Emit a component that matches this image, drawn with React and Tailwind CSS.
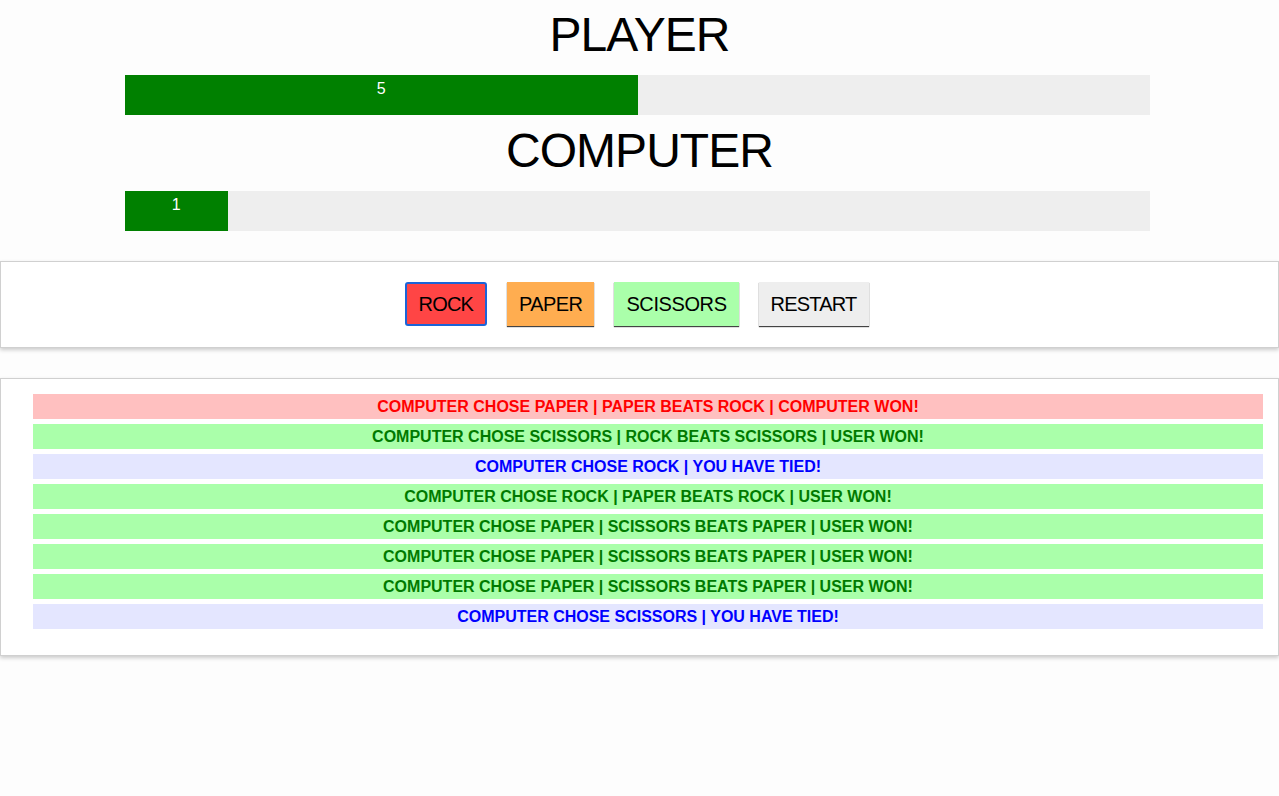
import React, { useState } from "react";

const MAX_SCORE = 10;

const history = [
  { text: "COMPUTER CHOSE PAPER | PAPER BEATS ROCK | COMPUTER WON!", result: "lose" },
  { text: "COMPUTER CHOSE SCISSORS | ROCK BEATS SCISSORS | USER WON!", result: "win" },
  { text: "COMPUTER CHOSE ROCK | YOU HAVE TIED!", result: "tie" },
  { text: "COMPUTER CHOSE ROCK | PAPER BEATS ROCK | USER WON!", result: "win" },
  { text: "COMPUTER CHOSE PAPER | SCISSORS BEATS PAPER | USER WON!", result: "win" },
  { text: "COMPUTER CHOSE PAPER | SCISSORS BEATS PAPER | USER WON!", result: "win" },
  { text: "COMPUTER CHOSE PAPER | SCISSORS BEATS PAPER | USER WON!", result: "win" },
  { text: "COMPUTER CHOSE SCISSORS | YOU HAVE TIED!", result: "tie" },
];

const rowStyles = {
  lose: "bg-[#ffc0c0] text-[#ff0000]",
  win: "bg-[#aaffaa] text-[#007a00]",
  tie: "bg-[#e4e6ff] text-[#0000ff]",
};

function ScoreBar({ score }) {
  return (
    <div className="ml-[125px] w-[1025px] h-10 bg-[#eeeeee]">
      <div
        className="h-full bg-[#008000] text-white text-center text-base leading-[18px] pt-[5px]"
        style={{ width: `${(score / MAX_SCORE) * 100}%` }}
      >
        {score}
      </div>
    </div>
  );
}

export default function App() {
  const [scores] = useState({ player: 5, computer: 1 });

  return (
    <div className="min-h-[796px] bg-[#fdfdfd] font-['Liberation_Sans',Arial,sans-serif] text-black">
      <h1 className="text-center text-[48px] leading-[54px] tracking-[-0.02em] pt-2 mb-[13px]">PLAYER</h1>
      <ScoreBar score={scores.player} />
      <h1 className="text-center text-[48px] leading-[54px] tracking-[-0.02em] mt-[9px] mb-[13px]">COMPUTER</h1>
      <ScoreBar score={scores.computer} />

      {/* controls */}
      <div className="mt-[30px] border border-[#d0d0d0] bg-white shadow-[0_2px_4px_rgba(0,0,0,0.2)] h-[87px] pr-[6px] flex items-center justify-center gap-5">
        <button className="h-11 px-3 text-[20px] tracking-[-0.04em] bg-[#ff4545] rounded-[3px] border-2 border-[#1a64d8] -mt-[2px]">
          ROCK
        </button>
        <button className="h-11 px-3 text-[20px] tracking-[-0.03em] bg-[#ffad50] shadow-[0_1px_1px_#444] -mt-[2px]">
          PAPER
        </button>
        <button className="h-11 px-3 text-[20px] tracking-[-0.02em] bg-[#aaffaa] shadow-[0_1px_1px_#444] -mt-[2px]">
          SCISSORS
        </button>
        <button className="h-11 px-3 text-[20px] tracking-[-0.04em] bg-[#eeeeee] shadow-[0_1px_1px_#444] -mt-[2px]">
          RESTART
        </button>
      </div>

      {/* results log */}
      <ul className="mt-[30px] border border-[#d0d0d0] bg-white shadow-[0_2px_4px_rgba(0,0,0,0.2)] pl-8 pr-[15px] pt-[15px] pb-[26px] flex flex-col gap-[5px]">
        {history.map((h, i) => (
          <li
            key={i}
            className={`h-[25px] text-center font-bold text-base leading-[25px] ${rowStyles[h.result]}`}
          >
            {h.text}
          </li>
        ))}
      </ul>
    </div>
  );
}
